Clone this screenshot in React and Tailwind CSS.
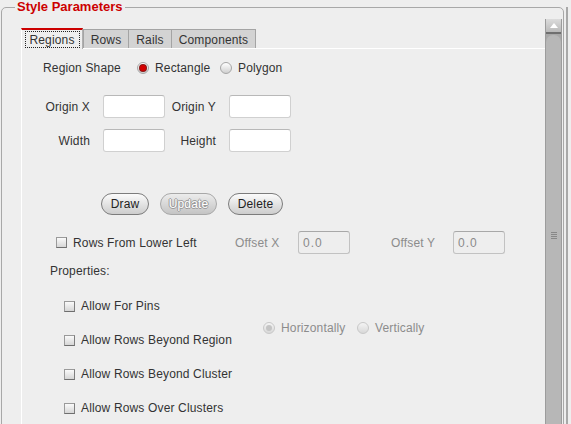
import React from 'react';

const font = { fontFamily: '"Liberation Sans", Arial, sans-serif' };

function Radio({ checked, disabled }) {
  return (
    <span
      className={
        'relative inline-flex w-[12px] h-[12px] rounded-full border items-center justify-center shrink-0 ' +
        (disabled
          ? 'border-[#c8c8c8] bg-gradient-to-b from-[#f4f4f4] to-[#d8d8d8]'
          : 'border-[#a6a6a6] bg-gradient-to-b from-[#ffffff] to-[#d0d0d0]')
      }
    >
      {checked && (
        <span
          className={
            'w-[6px] h-[6px] rounded-full ' +
            (disabled ? 'bg-[#c4c4c4]' : 'bg-[#d40000] shadow-[0_0_0_1px_#8a1818]')
          }
        />
      )}
    </span>
  );
}

function Check() {
  return (
    <span className="inline-block w-[11px] h-[11px] shrink-0 border border-[#9a9a9a] border-b-[#6e6e6e] border-r-[#7e7e7e] bg-gradient-to-b from-[#fafafa] to-[#d6d6d6]" />
  );
}

function Field({ w = 'w-[62px]', value, disabled }) {
  return (
    <div
      className={
        'h-[23px] ' + w + ' rounded-[3px] border flex items-center px-[4px] text-[12px] tracking-[1px] ' +
        (disabled
          ? 'bg-[#eeeeee] border-[#c2c2c2] border-t-[#a8a8a8] text-[#8a8a8a]'
          : 'bg-white border-[#d0d0d0] border-t-[#b8b8b8]')
      }
    >
      {value}
    </div>
  );
}

function Pill({ label, w, disabled }) {
  return (
    <button
      className={
        'h-[22px] ' + w + ' rounded-full border text-[12px] flex items-center justify-center ' +
        (disabled
          ? 'border-[#a8a8a8] bg-gradient-to-b from-[#ececec] to-[#c4c4c4] text-white [text-shadow:1px_0_0_#9a9a9a,-1px_0_0_#9a9a9a,0_1px_0_#9a9a9a,0_-1px_0_#9a9a9a]'
          : 'border-[#7c7c7c] bg-gradient-to-b from-[#fbfbfb] to-[#cdcdcd] text-[#222]')
      }
    >
      {label}
    </button>
  );
}

export default function App() {
  return (
    <div style={font} className="w-[571px] h-[424px] overflow-hidden bg-[#eeeeee] text-[#333] text-[12px] leading-[16px] tracking-[0.15px] flex pt-[7px] pl-[1px]">
      {/* Style Parameters group */}
      <div className="relative w-[563px] h-[440px] shrink-0 border border-[#a8a8a8] rounded-[5px] flex pt-[11px]">
        <div className="absolute top-[-9px] left-[13px] px-[2px] bg-[#eeeeee] text-[13px] font-bold text-[#cc0000] leading-[16px] tracking-normal">
          Style Parameters
        </div>

        {/* scroll content */}
        <div className="flex-1 pt-[9px] pl-[19px] flex flex-col">
          {/* tabs */}
          <div className="flex items-end h-[20px]">
            <div className="relative z-10 w-[62px] h-[21px] -mb-px border-t-2 border-[#cc0000] border-l border-l-white border-r border-r-[#b0b0b0] bg-[#eeeeee] flex items-start justify-center pt-[1px]">
              <span className="w-[55px] h-[17px] flex items-center justify-center border border-dotted border-[#222] pt-[1px]">Regions</span>
            </div>
            <div className="w-[46px] h-[19px] pt-[1px] border border-b-0 border-[#a4a4a4] bg-[#d3d3d3] flex items-center justify-center">Rows</div>
            <div className="w-[43px] h-[19px] pt-[1px] border border-b-0 border-l-0 border-[#a4a4a4] bg-[#d3d3d3] flex items-center justify-center">Rails</div>
            <div className="w-[84px] h-[19px] pt-[1px] border border-b-0 border-l-0 border-[#a4a4a4] bg-[#d3d3d3] flex items-center justify-center">Components</div>
          </div>

          {/* panel */}
          <div className="flex-1 border-t border-l border-white flex flex-col">
            {/* region shape */}
            <div className="flex items-center h-[16px] mt-[11px] pl-[21px]">
              <span className="w-[94px]">Region Shape</span>
              <Radio checked />
              <span className="ml-[6px] w-[65px]">Rectangle</span>
              <Radio />
              <span className="ml-[6px]">Polygon</span>
            </div>

            {/* origin */}
            <div className="flex items-center mt-[19px] pl-[21px]">
              <span className="w-[47px] text-right">Origin X</span>
              <span className="ml-[13px]"><Field /></span>
              <span className="w-[51px] text-right">Origin Y</span>
              <span className="ml-[13px]"><Field /></span>
            </div>
            <div className="flex items-center mt-[11px] pl-[21px]">
              <span className="w-[47px] text-right">Width</span>
              <span className="ml-[13px]"><Field /></span>
              <span className="w-[51px] text-right">Height</span>
              <span className="ml-[13px]"><Field /></span>
            </div>

            {/* buttons */}
            <div className="flex items-center gap-[11px] mt-[41px] pl-[79px]">
              <Pill label="Draw" w="w-[48px]" />
              <Pill label="Update" w="w-[57px]" disabled />
              <Pill label="Delete" w="w-[55px]" />
            </div>

            {/* rows from lower left */}
            <div className="flex items-center mt-[16px] pl-[34px]">
              <div className="w-[179px] flex items-center gap-[6px]">
                <Check />
                <span>Rows From Lower Left</span>
              </div>
              <span className="w-[63px] text-[#8c8c8c]">Offset X</span>
              <Field w="w-[52px]" value="0.0" disabled />
              <span className="ml-[41px] w-[62px] text-[#8c8c8c]">Offset Y</span>
              <Field w="w-[52px]" value="0.0" disabled />
            </div>

            <div className="mt-[9px] pl-[28px] h-[16px]">Properties:</div>

            {/* properties */}
            <div className="flex mt-[19px] pl-[42px]">
              <div className="w-[199px] flex flex-col gap-[18px]">
                {['Allow For Pins', 'Allow Rows Beyond Region', 'Allow Rows Beyond Cluster', 'Allow Rows Over Clusters'].map((t) => (
                  <div key={t} className="flex items-center h-[16px] gap-[6px]">
                    <Check />
                    <span>{t}</span>
                  </div>
                ))}
              </div>
              <div className="mt-[22px] flex items-center h-[16px] text-[#8c8c8c]">
                <Radio checked disabled />
                <span className="ml-[6px] w-[76px]">Horizontally</span>
                <Radio disabled />
                <span className="ml-[6px]">Vertically</span>
              </div>
            </div>
          </div>
        </div>

        {/* scrollbar */}
        <div className="w-[17px] mr-[1px] flex flex-col border-x border-[#9c9c9c] bg-[#a8a8a8]">
          <div className="h-[15px] bg-gradient-to-b from-[#dcdcdc] to-[#b9b9b9] border-b-2 border-[#6f6f6f] flex items-center justify-center">
            <svg width="8" height="5" viewBox="0 0 8 5">
              <polygon points="4,0 8,5 0,5" fill="#ffffff" />
            </svg>
          </div>
          <div className="flex-1 mt-px rounded-t-[7px] bg-[#b7b7b7] flex flex-col items-center pt-[197px]">
            <div className="flex flex-col gap-[1px]">
              <span className="block w-[6px] h-px bg-[#888]" />
              <span className="block w-[6px] h-px bg-[#888]" />
              <span className="block w-[6px] h-px bg-[#888]" />
              <span className="block w-[6px] h-px bg-[#888]" />
            </div>
          </div>
        </div>
      </div>
      <div className="ml-[2px] w-[2px] h-full bg-[#a8a8a8]" />
    </div>
  );
}
